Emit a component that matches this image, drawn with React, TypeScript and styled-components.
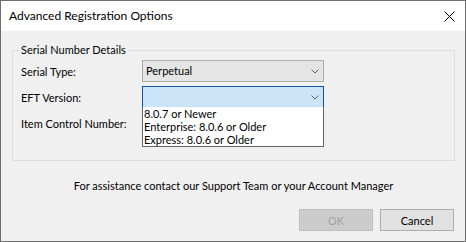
import React from "react";
import styled, { createGlobalStyle } from "styled-components";

const Global = createGlobalStyle`
  html, body { margin: 0; padding: 0; background: #ffffff; }
  body { font-family: Lato, "Liberation Sans", sans-serif; font-size: 11px; color: #000; }
  * { box-sizing: border-box; }
`;

const Window = styled.div`
  width: 466px;
  height: 242px;
  border: 1px solid #707070;
  background: #f0f0f0;
  display: flex;
  flex-direction: column;
`;

const TitleBar = styled.div`
  height: 30px;
  background: #ffffff;
  display: flex;
  align-items: center;
  justify-content: space-between;
  padding: 0 9px 0 8px;
`;

const Title = styled.span`
  font-size: 12px;
  line-height: 16px;
  color: #000;
`;

const CloseIcon = styled.svg`
  width: 11px;
  height: 11px;
  margin-right: 1px;
  display: block;
`;

const Body = styled.div`
  flex: 1;
  display: flex;
  flex-direction: column;
  padding: 19px 10px 10px 11px;
`;

const GroupBox = styled.div`
  position: relative;
  height: 111px;
  border: 1px solid #dcdcdc;
  padding: 9px 8px 0 8px;
`;

const Legend = styled.span`
  position: absolute;
  top: -9px;
  left: 6px;
  padding: 0 2px 0 2px;
  background: #f0f0f0;
  line-height: 16px;
  white-space: nowrap;
`;

const FormGrid = styled.div`
  display: grid;
  grid-template-columns: 121px 182px;
  grid-auto-rows: 22px;
  row-gap: 4px;
`;

const Label = styled.div`
  display: flex;
  align-items: center;
  line-height: 16px;
  padding-top: 2px;
  white-space: nowrap;
`;

const Combo = styled.div<{ $focused?: boolean }>`
  position: relative;
  display: flex;
  align-items: center;
  justify-content: space-between;
  height: 22px;
  padding: 0 4px 0 3px;
  border: 1px solid ${(p) => (p.$focused ? "#0a59a0" : "#adadad")};
  background: ${(p) => (p.$focused ? "#cce4f7" : "#e5e5e5")};
  line-height: 16px;
`;

const Chevron = styled.svg`
  width: 8px;
  height: 5px;
  display: block;
  margin-top: 1px;
`;

const DropList = styled.div`
  position: absolute;
  top: 100%;
  left: -1px;
  right: -1px;
  background: #ffffff;
  border: 1px solid #646464;
  border-top: none;
  z-index: 2;
`;

const DropItem = styled.div`
  height: 13px;
  line-height: 13px;
  padding-left: 1px;
  white-space: nowrap;
`;

const Footer = styled.div`
  margin-top: 17px;
  text-align: center;
  line-height: 16px;
  white-space: nowrap;
`;

const ButtonRow = styled.div`
  margin-top: auto;
  display: flex;
  justify-content: flex-end;
  gap: 7px;
  padding-right: 1px;
`;

const Button = styled.button<{ $disabled?: boolean }>`
  width: 74px;
  height: 22px;
  font: inherit;
  font-size: 11px;
  padding: 0;
  border: 1px solid ${(p) => (p.$disabled ? "#bfbfbf" : "#adadad")};
  background: ${(p) => (p.$disabled ? "#cccccc" : "#e1e1e1")};
  color: ${(p) => (p.$disabled ? "#a0a0a0" : "#000000")};
`;

const ChevronIcon = () => (
  <Chevron viewBox="0 0 8 5">
    <polyline points="0.5,0.5 4,4 7.5,0.5" fill="none" stroke="#606060" strokeWidth="1" />
  </Chevron>
);

export default function App() {
  return (
    <>
      <Global />
      <Window>
        <TitleBar>
          <Title>Advanced Registration Options</Title>
          <CloseIcon viewBox="0 0 11 11">
            <path d="M0.5 0.5 L10.5 10.5 M10.5 0.5 L0.5 10.5" stroke="#000" strokeWidth="1" fill="none" />
          </CloseIcon>
        </TitleBar>
        <Body>
          <GroupBox>
            <Legend>Serial Number Details</Legend>
            <FormGrid>
              <Label>Serial Type:</Label>
              <Combo>
                <span>Perpetual</span>
                <ChevronIcon />
              </Combo>
              <Label>EFT Version:</Label>
              <Combo $focused>
                <span />
                <ChevronIcon />
                <DropList>
                  <DropItem>8.0.7 or Newer</DropItem>
                  <DropItem>Enterprise: 8.0.6 or Older</DropItem>
                  <DropItem>Express: 8.0.6 or Older</DropItem>
                </DropList>
              </Combo>
              <Label>Item Control Number:</Label>
              <div />
            </FormGrid>
          </GroupBox>
          <Footer>For assistance contact our Support Team or your Account Manager</Footer>
          <ButtonRow>
            <Button $disabled disabled>OK</Button>
            <Button>Cancel</Button>
          </ButtonRow>
        </Body>
      </Window>
    </>
  );
}
